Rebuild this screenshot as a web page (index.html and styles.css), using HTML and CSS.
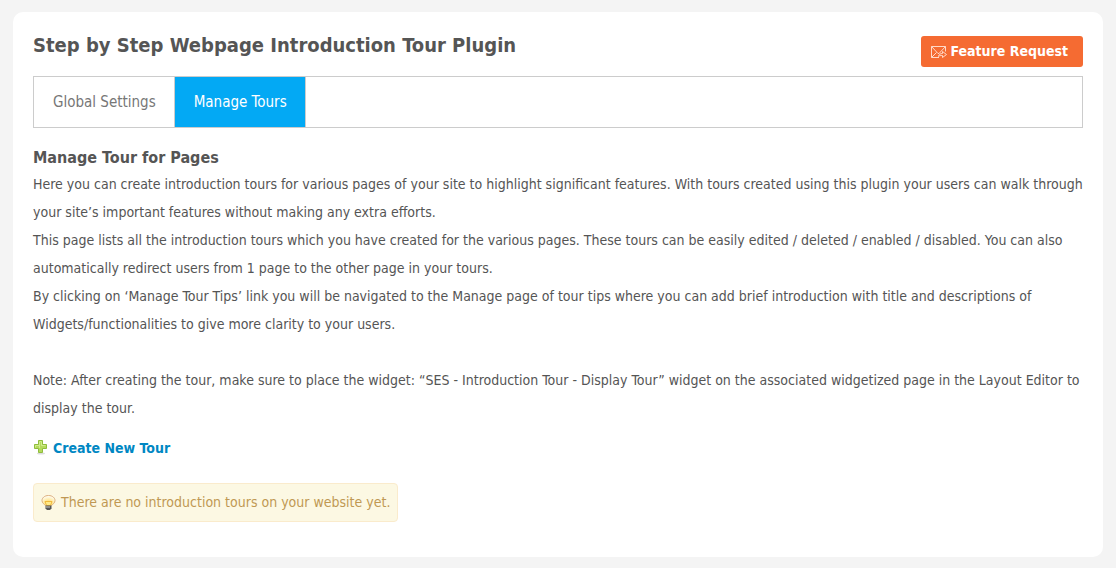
FILE: index.html
```html
<!DOCTYPE html>
<html lang="en">
<head>
<meta charset="utf-8">
<meta name="viewport" content="width=device-width, initial-scale=1">
<title>Step by Step Webpage Introduction Tour Plugin</title>
<link rel="stylesheet" href="styles.css">
</head>
<body>
<main class="panel">
  <header class="panel-header">
    <h1 class="title">Step by Step Webpage Introduction Tour Plugin</h1>
    <a class="request" href="#">
      <svg class="request-icon" viewBox="0 0 16 12" aria-hidden="true">
        <path d="M8 11.500H.5V.5h14v5M.5.5l6.500 7h1l6.500-7M.5 11.500l5-5"/>
        <path d="M7.500 10.500c0-2 2-3 4-3v-2l4 3-4 3v-2c-2 0-3 0-4 1z"/>
      </svg>
      <span>Feature Request</span>
    </a>
  </header>
  <nav class="tabs">
    <a class="tab" href="#">Global Settings</a>
    <a class="tab tab-active" href="#" aria-current="page">Manage Tours</a>
  </nav>
  <section>
    <h2 class="subtitle">Manage Tour for Pages</h2>
    <p class="text">Here you can create introduction tours for various pages of your site to highlight significant features. With tours created using this plugin your users can walk through your site’s important features without making any extra efforts.</p>
    <p class="text">This page lists all the introduction tours which you have created for the various pages. These tours can be easily edited / deleted / enabled / disabled. You can also automatically redirect users from 1 page to the other page in your tours.</p>
    <p class="text">By clicking on ‘Manage Tour Tips’ link you will be navigated to the Manage page of tour tips where you can add brief introduction with title and descriptions of Widgets/functionalities to give more clarity to your users.</p>
    <p class="text note">Note: After creating the tour, make sure to place the widget: “SES - Introduction Tour - Display Tour” widget on the associated widgetized page in the Layout Editor to display the tour.</p>
    <a class="create" href="#">
      <svg class="create-icon" viewBox="0 0 16 16" aria-hidden="true">
        <ellipse class="plus-shadow" cx="8" cy="13.500" rx="4" ry="1"/>
        <path class="plus-edge" d="M5.500 .5h4v4h4v4h-4v4h-4v-4h-4v-4h4z"/>
        <path class="plus-shine" d="M6.500 8V1.500h2v4h4M2.500 7.500v-2h4"/>
      </svg>
      <span>Create New Tour</span>
    </a>
    <p class="tip">
      <svg class="tip-icon" viewBox="0 0 16 16" aria-hidden="true">
        <defs>
          <radialGradient id="glow" cx=".5" cy=".75" r=".75">
            <stop offset="0" stop-color="#ffd34a"/>
            <stop offset=".5" stop-color="#ffedb0"/>
            <stop offset="1" stop-color="#ffffff"/>
          </radialGradient>
        </defs>
        <path d="M7.500.5c-4 0-6.500 2.500-6.500 5 0 2.500 2 3.500 3.500 5h6c1.500-1.500 3.500-2.500 3.500-5 0-2.500-2.500-5-6.500-5z" fill="url(#glow)" stroke="#dcae7c"/>
        <path d="M4 6.500h7l-1.500 4h-4z" fill="#ffe98a" stroke="#f0b93a"/>
        <path d="M4.500 10.500h6v3l-1.500 1.500h-3l-1.500-1.500z" fill="#555"/>
        <path d="M5 12h4" stroke="#c8c8c8"/>
      </svg>
      <span>There are no introduction tours on your website yet.</span>
    </p>
  </section>
</main>
</body>
</html>
```
FILE: styles.css
```css
* {
  box-sizing: border-box;
}

body {
  margin: 0;
  padding: 12px 13px 11px;
  background: #f4f4f4;
  color: #555;
  font: 14px/28px Tahoma, "DejaVu Sans Condensed", sans-serif;
}

.panel {
  padding: 20px 20px 35px;
  border-radius: 10px;
  background: #fff;
}

.panel-header {
  display: flex;
  justify-content: space-between;
  align-items: flex-start;
  gap: 20px;
}

.title {
  margin: 0;
  font-size: 20px;
  line-height: 26px;
}

.request {
  display: flex;
  align-items: center;
  gap: 3px;
  margin: 4px 0 9px;
  padding: 0 15px 0 10px;
  border-radius: 3px;
  background: #f56b32;
  color: #fff;
  font-weight: 700;
  line-height: 31px;
  text-decoration: none;
  white-space: nowrap;
}

.request-icon {
  width: 16px;
  height: 12px;
  fill: none;
  stroke: #ffd9c8;
}

.tabs {
  display: flex;
  border: 1px solid #ccc;
}

.tab {
  padding: 1px 18px 0 19px;
  border-right: 1px solid #ccc;
  color: #777;
  font-size: 15px;
  line-height: 49px;
  text-decoration: none;
}

.tab-active {
  background: #03a9f4;
  color: #fff;
}

.subtitle {
  margin: 18px 0 0;
  font-size: 16px;
  line-height: 24px;
}

.text {
  margin: 0;
}

.note {
  margin-top: 28px;
}

.create {
  display: flex;
  align-items: center;
  gap: 4px;
  width: fit-content;
  margin-top: 12px;
  color: #0087c3;
  font-weight: 700;
  text-decoration: none;
}

.create-icon {
  width: 16px;
  height: 16px;
}

.plus-shadow {
  fill: #ddd;
}

.plus-edge {
  fill: #b4da5c;
  stroke: #8fbd3c;
}

.plus-shine {
  fill: none;
  stroke: #d0ec8c;
}

.tip {
  display: flex;
  align-items: center;
  gap: 4px;
  width: fit-content;
  margin: 21px 0 0;
  padding: 0 7px;
  border: 1px solid #faebcc;
  border-radius: 4px;
  background: #fcf8e3;
  color: #c09853;
  line-height: 37px;
}

.tip-icon {
  width: 16px;
  height: 16px;
}
```
